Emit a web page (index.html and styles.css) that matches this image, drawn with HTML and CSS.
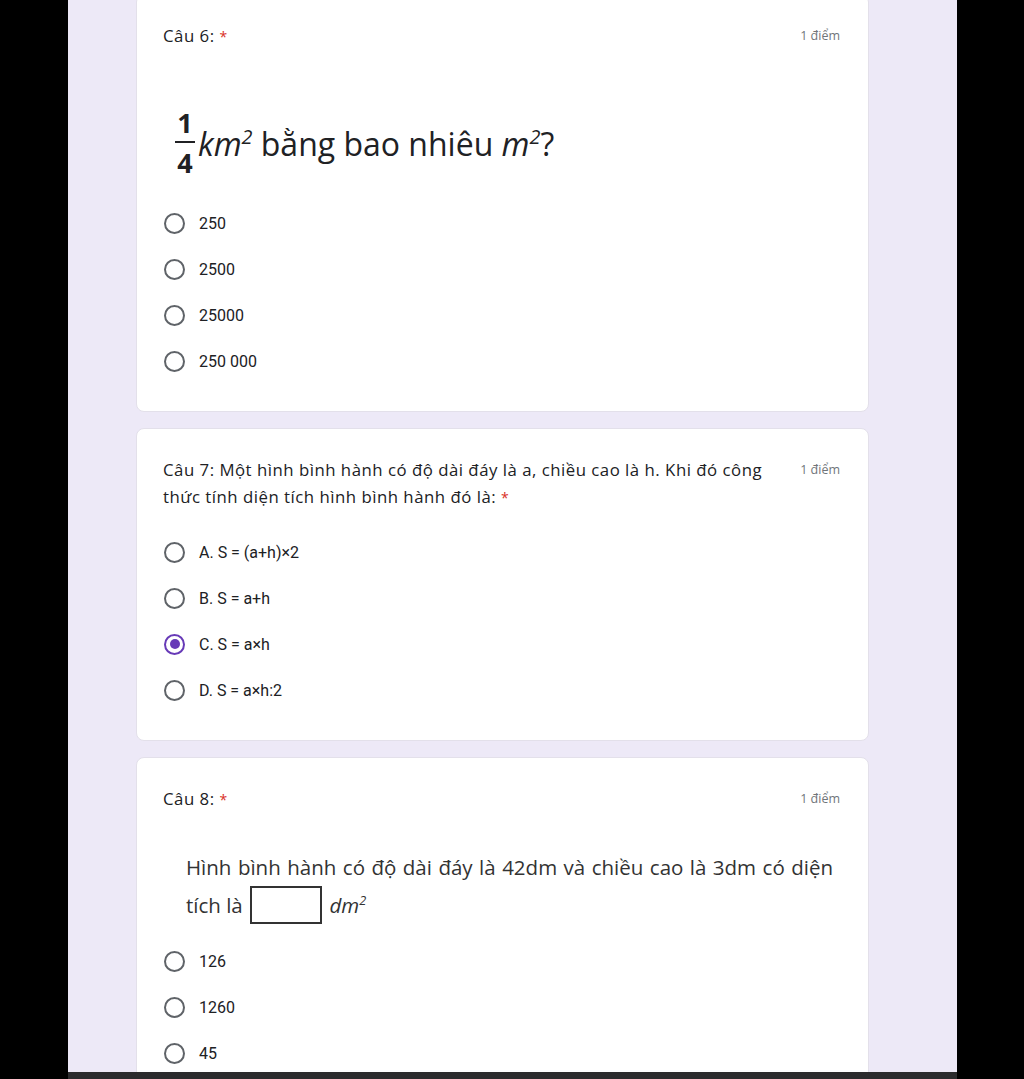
FILE: index.html
```html
<!DOCTYPE html>
<html lang="vi">
  <head>
    <meta charset="UTF-8" />
    <meta name="viewport" content="width=device-width, initial-scale=1.0" />
    <title>Bài kiểm tra</title>
    <link rel="stylesheet" href="styles.css">
  </head>
  <body>
    <div class="page">
      <div class="form-area">
        <div class="card card-first">
          <div class="card-header">
            <div class="title">Câu 6: <span class="required">*</span></div>
            <div class="points">1 điểm</div>
          </div>
          <div class="math">
            <span class="fraction">
              <span class="num">1</span>
              <span class="bar"></span>
              <span class="den">4</span>
            </span>
            <span class="math-text"><i>km<sup>2</sup></i> bằng bao nhiêu <i>m<sup>2</sup></i>?</span>
          </div>
          <div class="options">
            <label class="option"><span class="radio"></span>250</label>
            <label class="option"><span class="radio"></span>2500</label>
            <label class="option"><span class="radio"></span>25000</label>
            <label class="option"><span class="radio"></span>250 000</label>
          </div>
        </div>

        <div class="card">
          <div class="card-header">
            <div class="title">Câu 7: Một hình bình hành có độ dài đáy là a, chiều cao là h. Khi đó công thức tính diện tích hình bình hành đó là: <span class="required">*</span></div>
            <div class="points">1 điểm</div>
          </div>
          <div class="options options-spaced">
            <label class="option"><span class="radio"></span>A. S = (a+h)×2</label>
            <label class="option"><span class="radio"></span>B. S = a+h</label>
            <label class="option"><span class="radio checked"></span>C. S = a×h</label>
            <label class="option"><span class="radio"></span>D. S = a×h:2</label>
          </div>
        </div>

        <div class="card">
          <div class="card-header">
            <div class="title">Câu 8: <span class="required">*</span></div>
            <div class="points">1 điểm</div>
          </div>
          <div class="problem">
            Hình bình hành có độ dài đáy là 42dm và chiều cao là 3dm có diện tích là <span class="blank"></span> <i>dm<sup>2</sup></i>
          </div>
          <div class="options">
            <label class="option"><span class="radio"></span>126</label>
            <label class="option"><span class="radio"></span>1260</label>
            <label class="option"><span class="radio"></span>45</label>
          </div>
        </div>
      </div>
      <div class="bottom-bar"></div>
    </div>
  </body>
</html>
```

FILE: styles.css
```css
body {
  margin: 0;
  background-color: #000;
  font-family: Roboto, Arial, sans-serif;
  color: #202124;
}

.page {
  margin-left: 68px;
  width: 889px;
  height: 1079px;
  background-color: #ede9f7;
  display: flex;
  flex-direction: column;
  overflow: hidden;
}

.form-area {
  flex: 1;
  overflow: hidden;
  padding-left: 68px;
  display: flex;
  flex-direction: column;
  gap: 16px;
}

.bottom-bar {
  height: 7px;
  background-color: #2b2b2d;
}

.card {
  width: 733px;
  box-sizing: border-box;
  background-color: #fff;
  border: 1px solid #e3e0ea;
  border-radius: 8px;
  padding: 27px 26px 27px 26px;
  flex-shrink: 0;
}

.card-first {
  margin-top: -6px;
}

.card-header {
  display: flex;
  justify-content: space-between;
  align-items: flex-start;
}

.title {
  font-family: "Open Sans", Arial, sans-serif;
  font-size: 16.8px;
  letter-spacing: 0.5px;
  line-height: 27px;
  max-width: 612px;
  color: #202124;
}

.required {
  color: #d93025;
  font-size: 14px;
}

.points {
  font-family: "Open Sans", Arial, sans-serif;
  font-size: 12.5px;
  line-height: 27px;
  color: #70757a;
  padding-right: 2px;
}

.math {
  display: flex;
  align-items: center;
  margin: 55px 0 20px 12px;
  height: 75px;
  font-family: "Open Sans", Arial, sans-serif;
}

.fraction {
  display: inline-flex;
  flex-direction: column;
  align-items: center;
  font-weight: bold;
  font-size: 27px;
  line-height: 1;
  width: 20px;
  margin-right: 3px;
}

.fraction .bar {
  width: 20px;
  height: 2px;
  background-color: #202124;
  margin: 5px 0 6px;
}

.math-text {
  font-size: 32px;
  margin-top: 2px;
}

.math-text sup,
.problem sup {
  font-size: 62%;
  line-height: 0;
}

.options {
  display: flex;
  flex-direction: column;
}

.options-spaced {
  margin-top: 18px;
}

.option {
  display: flex;
  align-items: center;
  height: 46px;
  font-size: 16px;
  color: #202124;
}

.radio {
  width: 17px;
  height: 17px;
  border: 2px solid #5f6368;
  border-radius: 50%;
  margin: 0 14px 0 1px;
  display: flex;
  justify-content: center;
  align-items: center;
}

.radio.checked {
  border-color: #673ab7;
}

.radio.checked::after {
  content: "";
  width: 10px;
  height: 10px;
  border-radius: 50%;
  background-color: #673ab7;
}

.problem {
  font-family: "Open Sans", Arial, sans-serif;
  font-size: 20.5px;
  line-height: 38px;
  color: #333;
  text-align: justify;
  margin: 35px 9px 14px 23px;
}

.blank {
  display: inline-block;
  box-sizing: border-box;
  width: 72px;
  height: 38px;
  border: 2px solid #333;
  vertical-align: top;
  margin: 0 2px;
}
```
